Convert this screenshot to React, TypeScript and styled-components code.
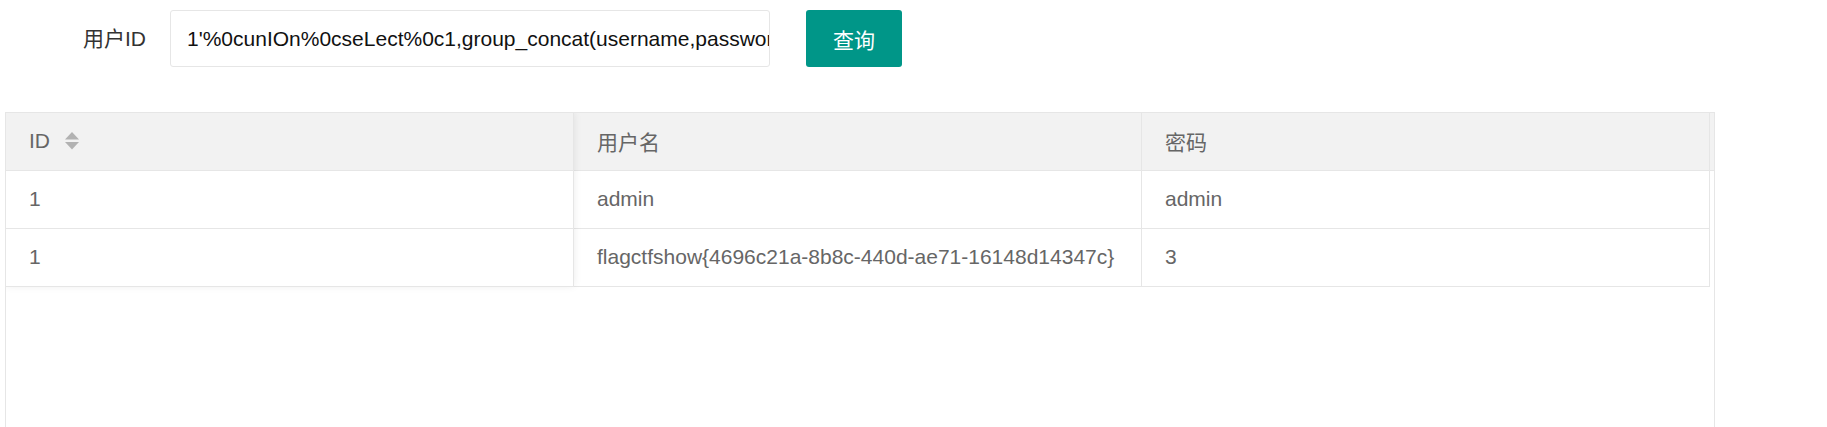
import React from "react";
import styled, { createGlobalStyle } from "styled-components";

const GlobalStyle = createGlobalStyle`
  html, body {
    margin: 0;
    padding: 0;
    background: #fff;
  }
  body {
    font-family: "Liberation Sans", "Noto Sans CJK SC", sans-serif;
  }
`;

const Page = styled.div`
  padding-top: 10px;
`;

const QueryBar = styled.form`
  display: flex;
  align-items: center;
  height: 57px;
`;

const FieldLabel = styled.label`
  width: 146px;
  box-sizing: border-box;
  text-align: right;
  font-size: 21px;
  line-height: 57px;
  color: #333;
`;

const QueryField = styled.div`
  margin-left: 24px;
  width: 600px;
  height: 57px;
  box-sizing: border-box;
  border: 1px solid #e6e6e6;
  border-radius: 3px;
  padding-left: 16px;
  font-size: 21px;
  line-height: 55px;
  color: #111;
  white-space: nowrap;
  overflow: hidden;
`;

const QueryButton = styled.button`
  margin-left: 36px;
  width: 96px;
  height: 57px;
  padding: 0;
  border: 0;
  border-radius: 3px;
  background: #009688;
  color: #fff;
  font-family: inherit;
  font-size: 21px;
  cursor: pointer;
`;

const TableView = styled.div`
  margin: 45px 0 0 5px;
  width: 1710px;
  height: 340px;
  box-sizing: border-box;
  border: 1px solid #e6e6e6;
  display: flex;
  align-items: flex-start;
  overflow: hidden;
`;

const Column = styled.div<{ $fixed?: boolean }>`
  display: flex;
  flex-direction: column;
  width: 568px;
  background: #fff;
  position: ${(p) => (p.$fixed ? "relative" : "static")};
  z-index: ${(p) => (p.$fixed ? 1 : "auto")};
  box-shadow: ${(p) => (p.$fixed ? "0 -1px 8px rgba(0, 0, 0, 0.08)" : "none")};
`;

const Cell = styled.div<{ $head?: boolean }>`
  display: flex;
  align-items: center;
  height: 58px;
  box-sizing: border-box;
  padding: 0 23px 1px;
  border-right: 1px solid #e6e6e6;
  border-bottom: 1px solid #e6e6e6;
  background: ${(p) => (p.$head ? "#f2f2f2" : "#fff")};
  color: #666;
  font-size: 21px;
  white-space: nowrap;
`;

const HeadPatch = styled.div`
  width: 4px;
  height: 58px;
  box-sizing: border-box;
  background: #f2f2f2;
  border-bottom: 1px solid #e6e6e6;
`;

const SortIcon = styled.svg`
  margin-left: 15px;
  flex: none;
`;

const columns = [
  { key: "id", title: "ID", sort: true },
  { key: "username", title: "用户名" },
  { key: "password", title: "密码" },
];

const rows = [
  { id: "1", username: "admin", password: "admin" },
  { id: "1", username: "flagctfshow{4696c21a-8b8c-440d-ae71-16148d14347c}", password: "3" },
];

export default function App() {
  return (
    <Page>
      <GlobalStyle />
      <QueryBar onSubmit={(e) => e.preventDefault()}>
        <FieldLabel>用户ID</FieldLabel>
        <QueryField role="textbox">1'%0cunIOn%0cseLect%0c1,group_concat(username,password</QueryField>
        <QueryButton type="submit">查询</QueryButton>
      </QueryBar>
      <TableView>
        {columns.map((col, i) => (
          <Column key={col.key} $fixed={i === 0}>
            <Cell $head>
              {col.title}
              {col.sort && (
                <SortIcon width="14" height="18" viewBox="0 0 14 18">
                  <polygon points="0,7.5 7,0 14,7.5" fill="#b2b2b2" />
                  <polygon points="0,10 14,10 7,17.5" fill="#b2b2b2" />
                </SortIcon>
              )}
            </Cell>
            {rows.map((row, r) => (
              <Cell key={r}>{row[col.key as keyof typeof row]}</Cell>
            ))}
          </Column>
        ))}
        <HeadPatch />
      </TableView>
    </Page>
  );
}
